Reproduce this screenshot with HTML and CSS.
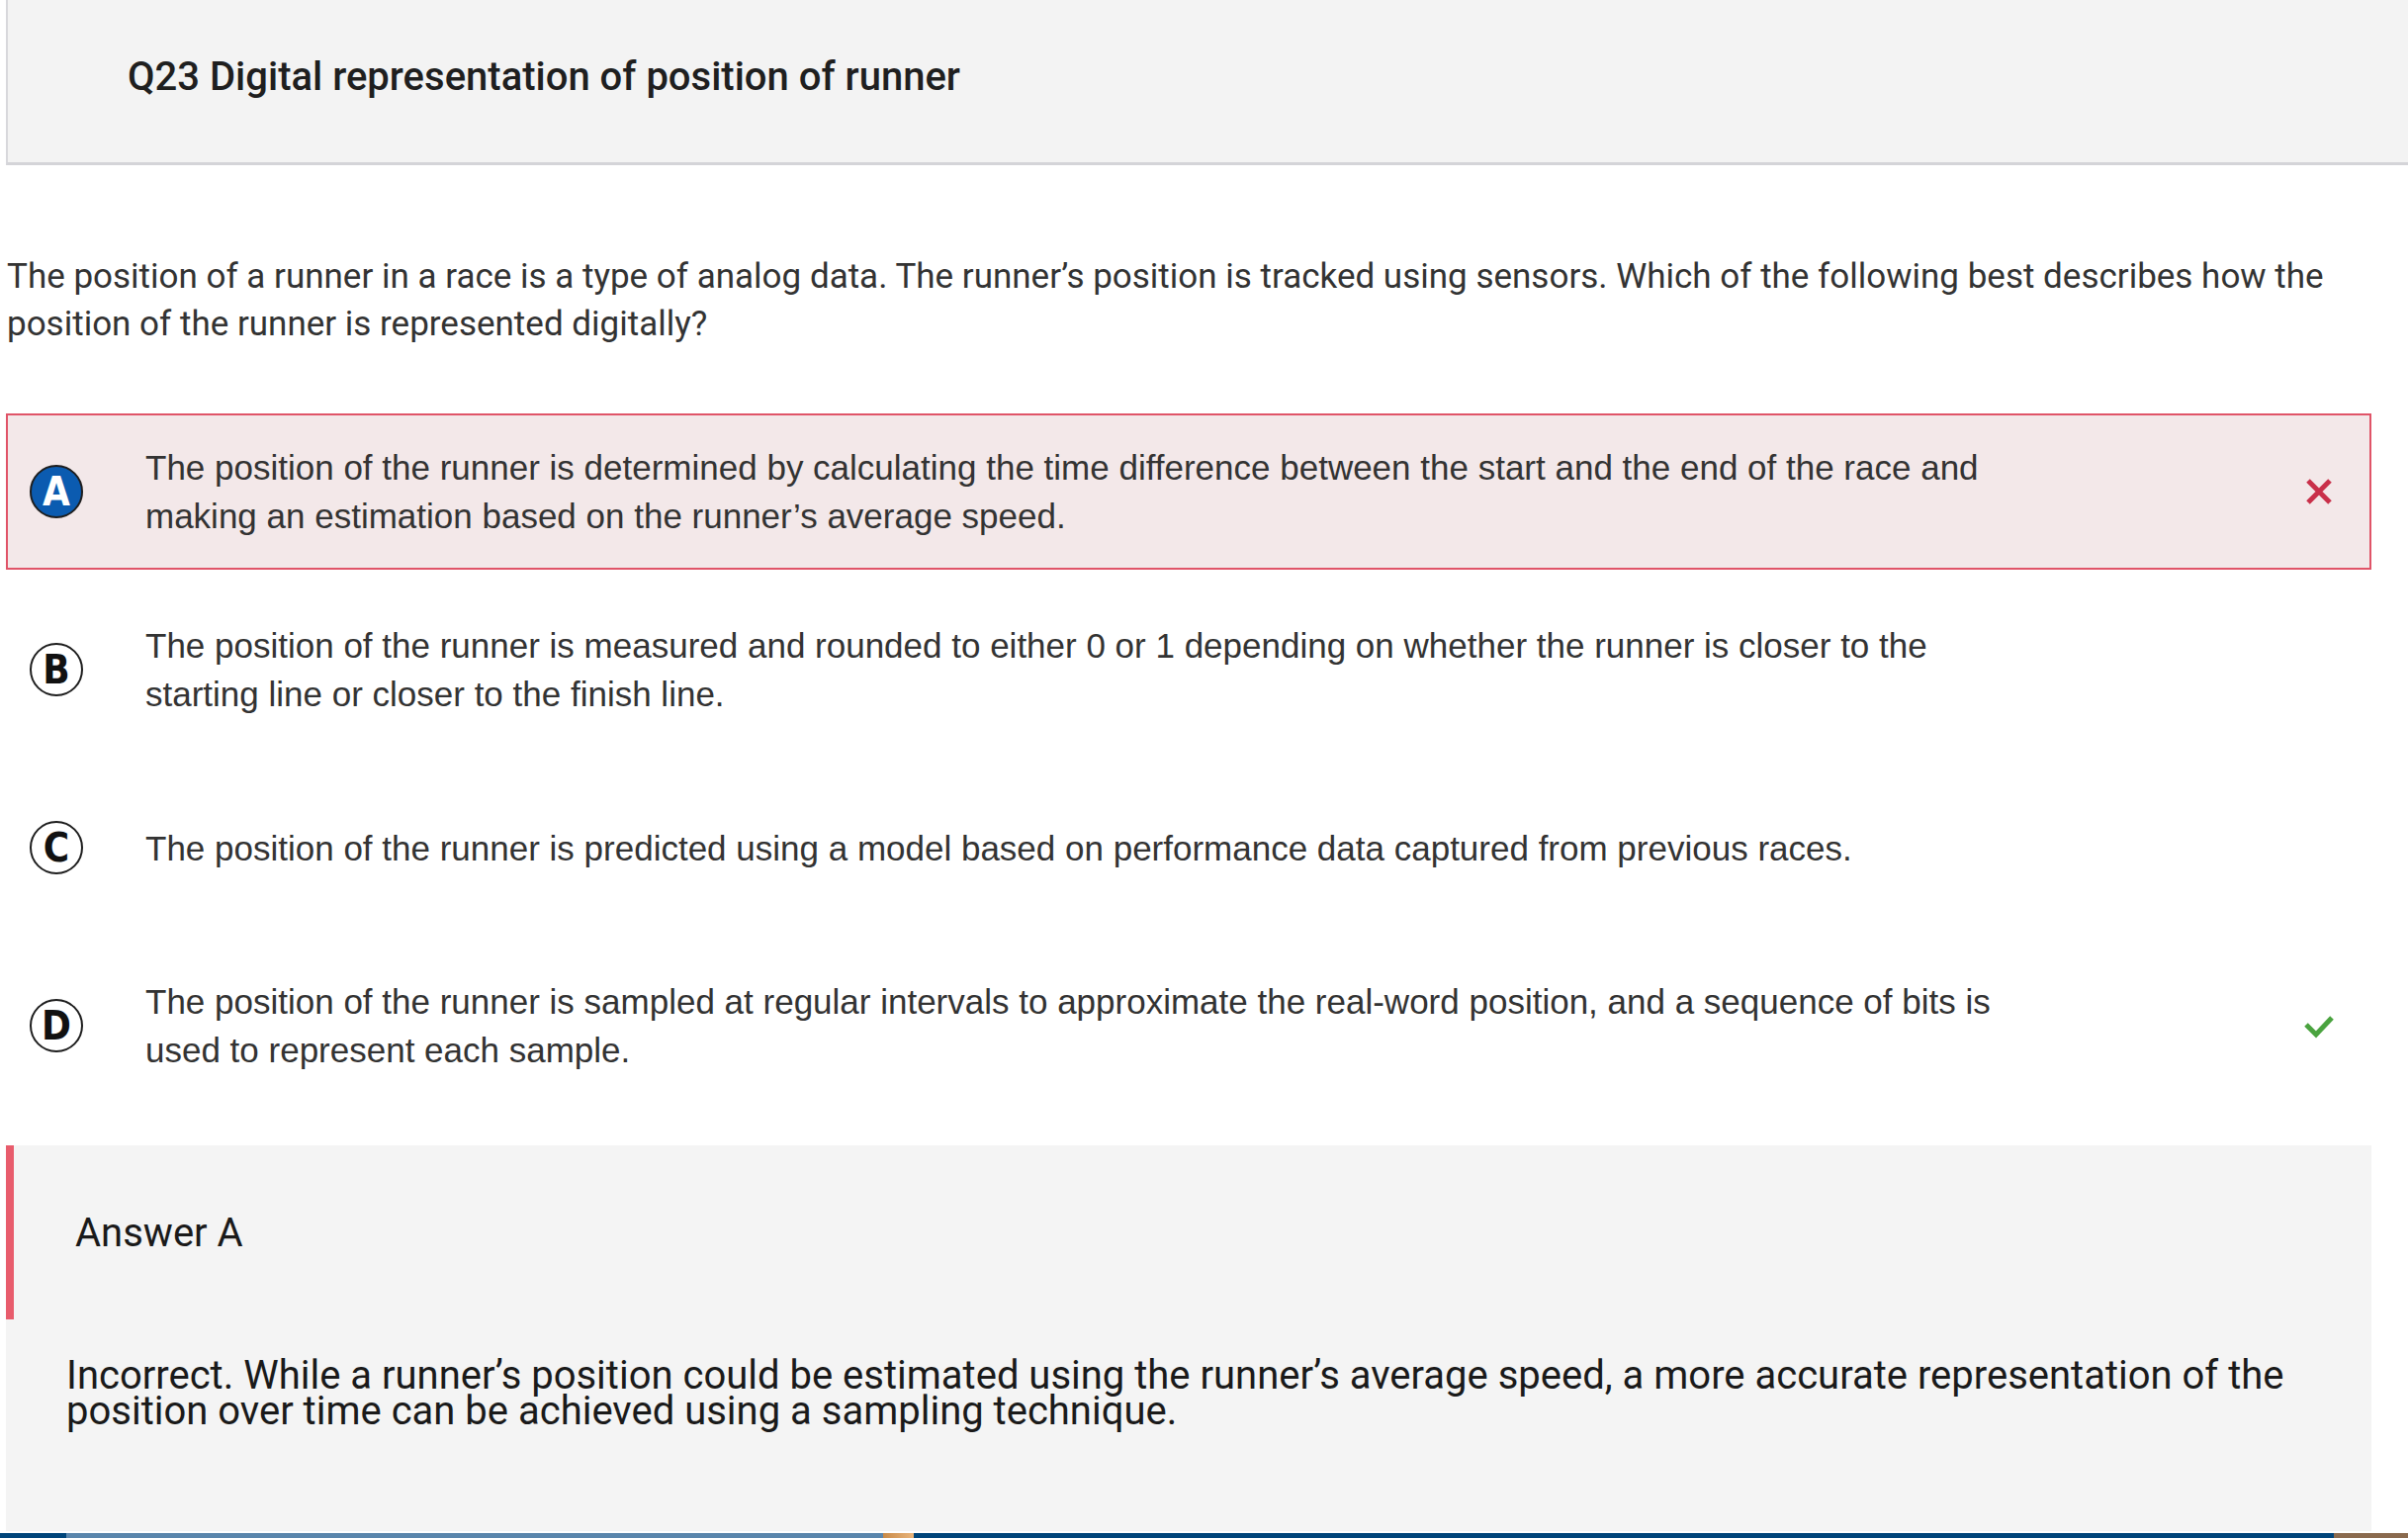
FILE: index.html
```html
<!DOCTYPE html>
<html lang="en">
<head>
<meta charset="utf-8">
<title>Q23 Digital representation of position of runner</title>
<link rel="stylesheet" href="styles.css">
</head>
<body>
<header class="header">
  <h1 class="title">Q23 Digital representation of position of runner</h1>
</header>
<main class="main">
  <p class="question">The position of a runner in a race is a type of analog data. The runner’s position is tracked using sensors. Which of the following best describes how the<br>position of the runner is represented digitally?</p>

  <div class="option wrong">
    <span class="badge selected">A</span>
    <p class="opt-text">The position of the runner is determined by calculating the time difference between the start and the end of the race and<br>making an estimation based on the runner’s average speed.</p>
    <span class="mark">
      <svg width="28" height="28" viewBox="0 0 28 28"><path d="M3 3 L25 25 M25 3 L3 25" stroke="#c9304a" stroke-width="5" fill="none"/></svg>
    </span>
  </div>

  <div class="option">
    <span class="badge">B</span>
    <p class="opt-text">The position of the runner is measured and rounded to either 0 or 1 depending on whether the runner is closer to the<br>starting line or closer to the finish line.</p>
    <span class="mark"></span>
  </div>

  <div class="option">
    <span class="badge">C</span>
    <p class="opt-text">The position of the runner is predicted using a model based on performance data captured from previous races.</p>
    <span class="mark"></span>
  </div>

  <div class="option last">
    <span class="badge">D</span>
    <p class="opt-text">The position of the runner is sampled at regular intervals to approximate the real-word position, and a sequence of bits is<br>used to represent each sample.</p>
    <span class="mark">
      <svg width="32" height="26" viewBox="0 0 32 26"><path d="M3 12 L13 22 L29 5" stroke="#4aa33f" stroke-width="5" fill="none"/></svg>
    </span>
  </div>

  <section class="feedback">
    <div class="fb-head">Answer A</div>
    <p class="fb-body">Incorrect. While a runner’s position could be estimated using the runner’s average speed, a more accurate representation of the<br>position over time can be achieved using a sampling technique.</p>
  </section>
</main>
<div class="progress">
  <span class="seg seg-dark1"></span>
  <span class="seg seg-light"></span>
  <span class="seg seg-orange"></span>
  <span class="seg seg-dark2"></span>
  <span class="seg seg-brown"></span>
</div>
</body>
</html>
```

FILE: styles.css
```css
html, body {
  margin: 0;
  padding: 0;
  background: #ffffff;
}

body {
  width: 2435px;
  font-family: Roboto, "Liberation Sans", sans-serif;
  color: #333333;
}

.header {
  margin-left: 6px;
  height: 164px;
  box-sizing: content-box;
  border-left: 2px solid #d8d8dc;
  border-bottom: 3px solid #d4d4d8;
  background: #f3f3f3;
  display: flex;
  align-items: center;
  padding-left: 121px;
}

.title {
  margin: 0 0 8px 0;
  font-family: Roboto, sans-serif;
  font-weight: 500;
  font-size: 40px;
  line-height: 48px;
  color: #1f1f1f;
}

.main {
  margin-left: 6px;
  margin-right: 37px;
}

.question {
  margin: 89px 0 66px 1px;
  font-family: Roboto, sans-serif;
  font-size: 35px;
  line-height: 48px;
  color: #333333;
  white-space: nowrap;
}

.option {
  display: flex;
  align-items: center;
  height: 158px;
  box-sizing: border-box;
  border: 2px solid transparent;
  margin-bottom: 22px;
  padding-left: 22px;
}

.option.last {
  margin-bottom: 42px;
}

.option.wrong {
  background: #f3e8e9;
  border-color: #e05468;
}

.badge {
  flex: none;
  width: 50px;
  height: 50px;
  border: 2px solid #1e1e1e;
  border-radius: 50%;
  background: #ffffff;
  color: #111111;
  display: flex;
  align-items: center;
  justify-content: center;
  font-family: "Liberation Sans Narrow", "DejaVu Sans Condensed", "Liberation Sans", sans-serif;
  font-weight: 700;
  font-size: 40px;
  line-height: 1;
}

.badge.selected {
  background: #0b5bb0;
  color: #ffffff;
}

.opt-text {
  flex: 1;
  margin: 0 0 0 63px;
  font-family: "Liberation Sans", Arial, sans-serif;
  font-size: 35px;
  line-height: 49px;
  color: #333333;
  white-space: nowrap;
}

.mark {
  flex: none;
  width: 56px;
  margin-right: 23px;
  display: flex;
  justify-content: center;
  align-items: center;
}

.feedback {
  background: #f4f4f4;
}

.fb-head {
  height: 176px;
  border-left: 8px solid #e85c6c;
  display: flex;
  align-items: center;
  padding-left: 62px;
  font-family: Roboto, sans-serif;
  font-size: 40px;
  color: #1a1a1a;
}

.fb-body {
  margin: 0;
  padding: 39px 0 103px 61px;
  font-family: Roboto, sans-serif;
  font-size: 40px;
  line-height: 36px;
  color: #1a1a1a;
  white-space: nowrap;
}

.progress {
  position: fixed;
  left: 0;
  right: 0;
  bottom: 0;
  height: 5px;
  display: flex;
}

.seg {
  display: block;
  height: 100%;
}

.seg-dark1 { width: 67px; background: #00457a; }
.seg-light { width: 826px; background: #5a86ac; }
.seg-orange { width: 31px; background: linear-gradient(90deg, #c98a48, #e9b57c); }
.seg-dark2 { flex: 1; background: #00457a; }
.seg-brown { width: 75px; background: #8a6a4e; }
```
